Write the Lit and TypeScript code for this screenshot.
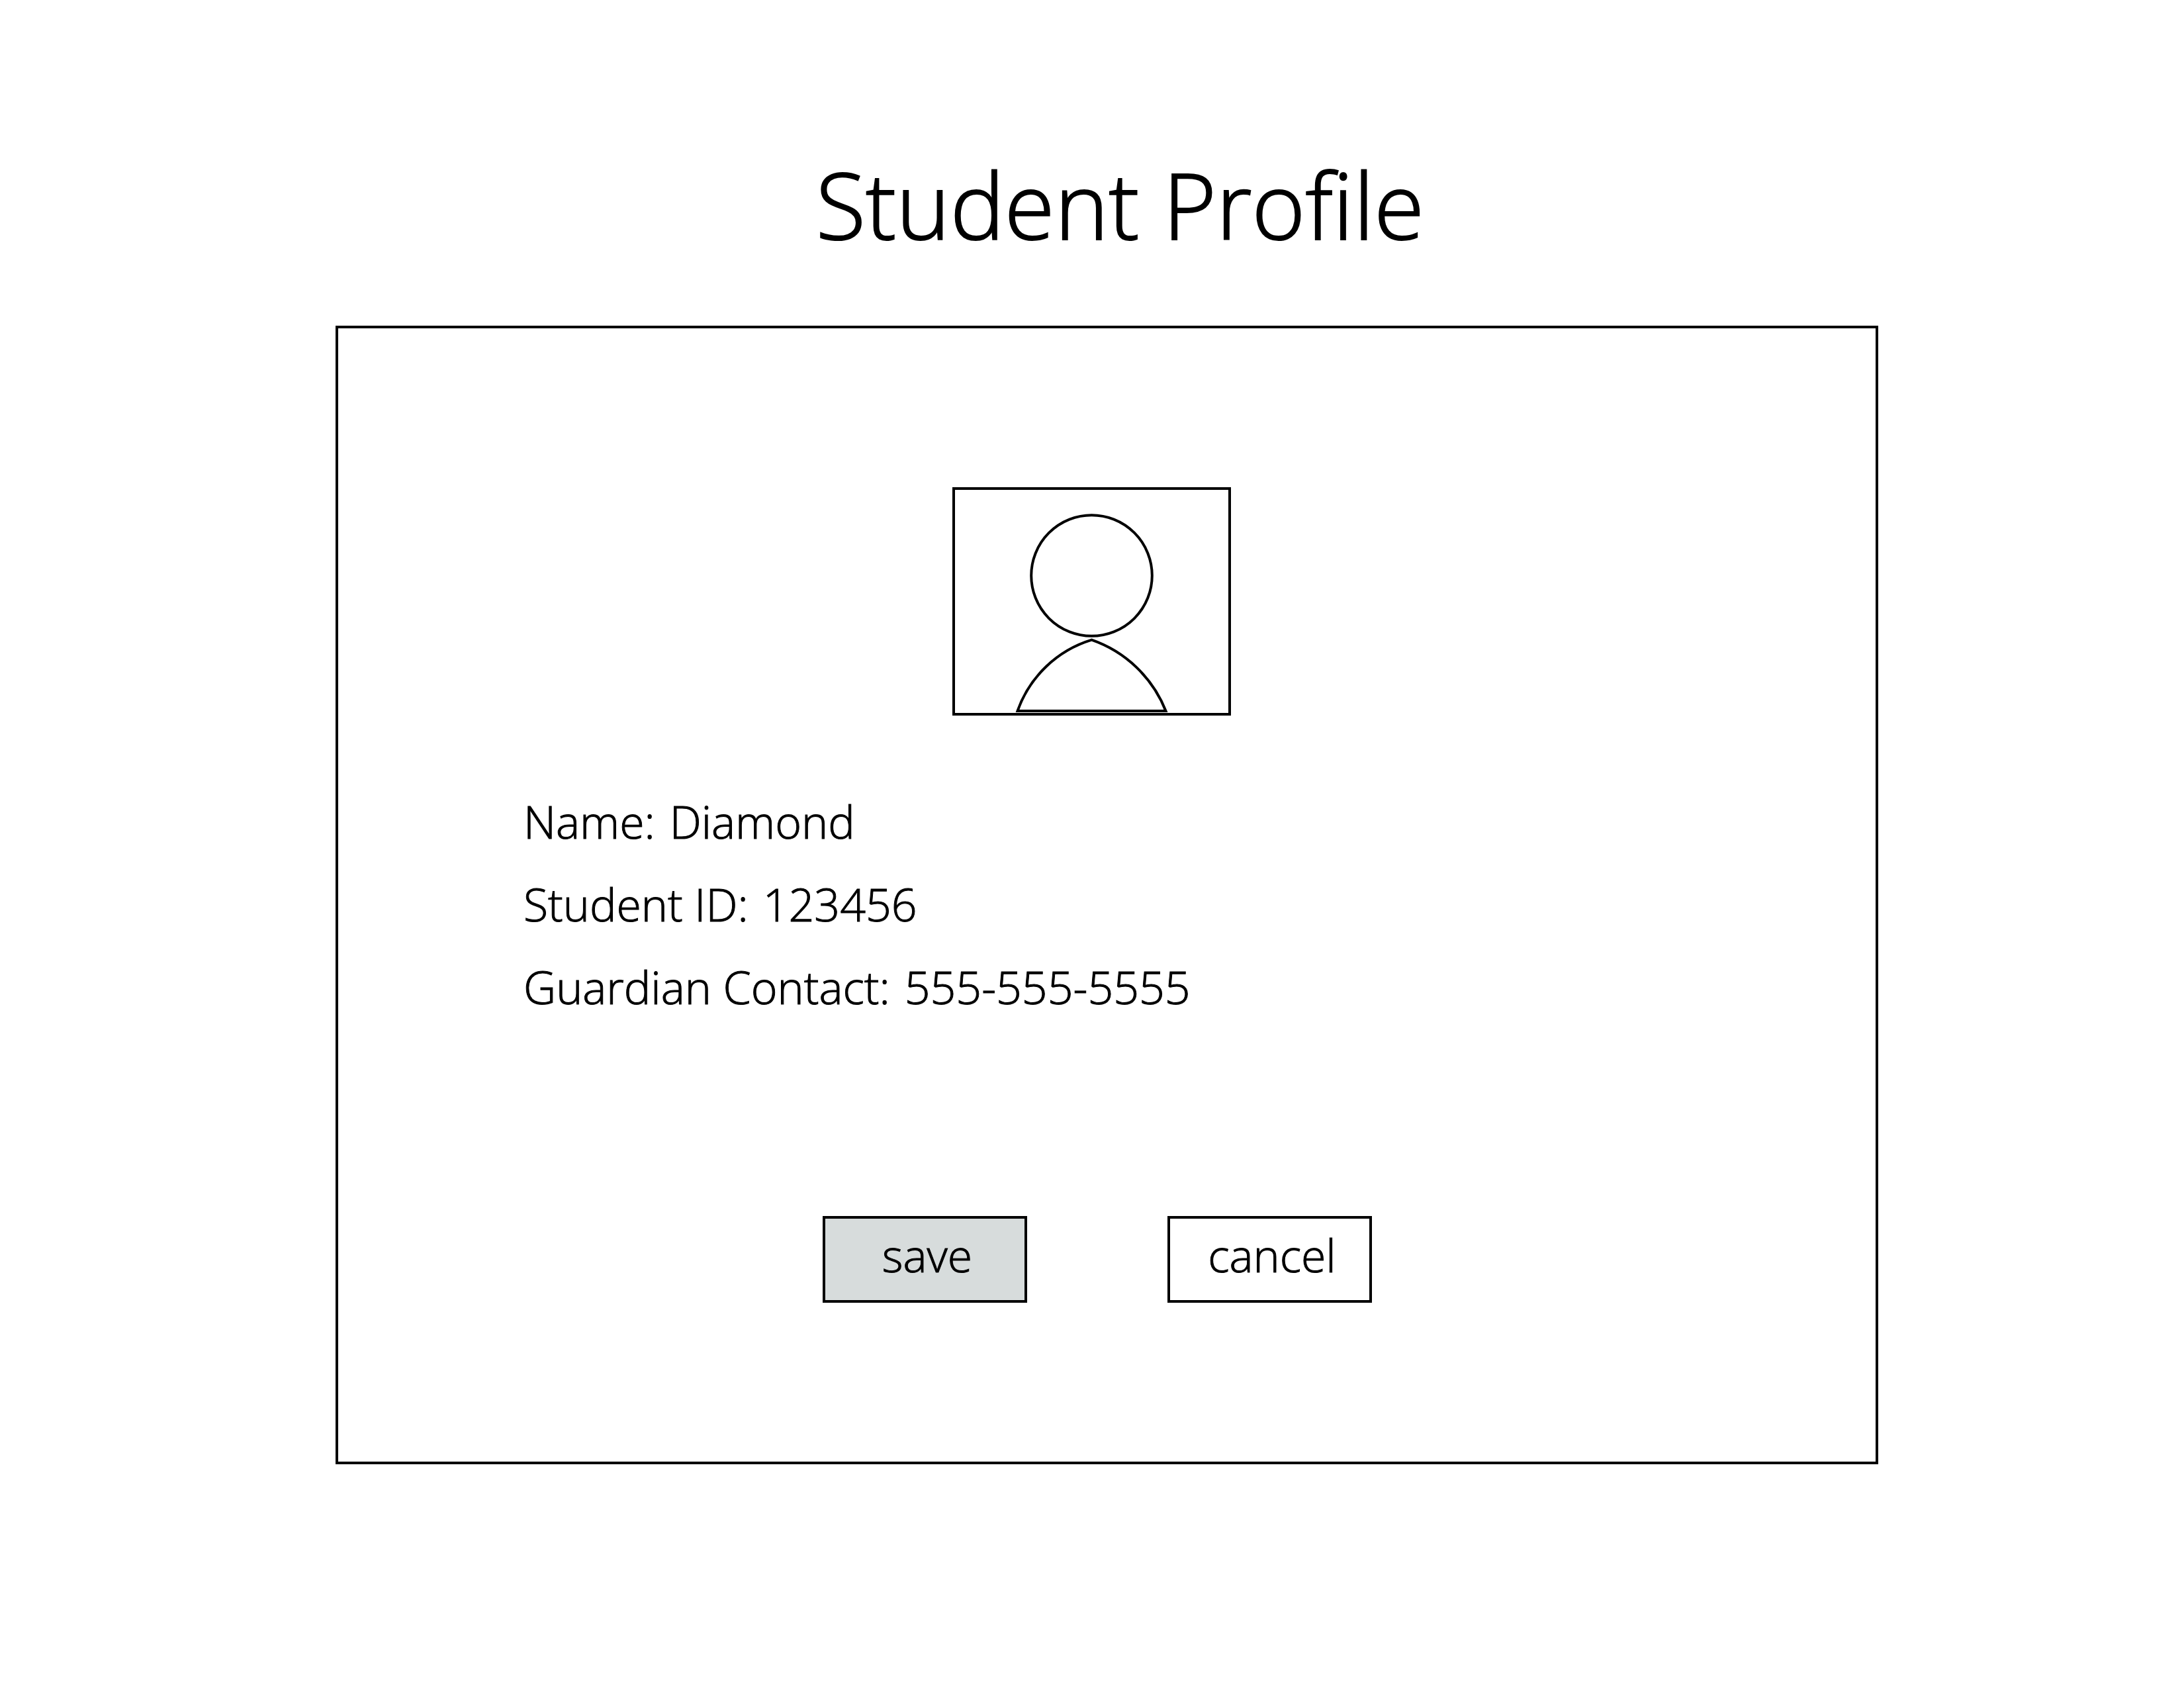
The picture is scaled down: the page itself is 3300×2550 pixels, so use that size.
import { LitElement, html, css } from "lit";
import { customElement, property } from "lit/decorators.js";

interface Field {
  label: string;
  value: string;
}

@customElement("profile-photo")
export class ProfilePhoto extends LitElement {
  static styles = css`
    :host {
      display: block;
    }
    .frame {
      box-sizing: border-box;
      display: block;
      width: 421px;
      border: 4px solid #000;
    }
    .figure {
      display: block;
      width: 100%;
      fill: none;
      stroke: #000;
      stroke-width: 4;
    }
  `;

  render() {
    return html`
      <div class="frame">
        <svg class="figure" viewBox="0 0 413 337" role="img" aria-label="Student photo">
          <circle cx="206.5" cy="129.5" r="91.3" />
          <path d="M206.5 226.7 A172 172 0 0 0 94.5 334 H318.5 A186 186 0 0 0 206.5 226.7 Z" />
        </svg>
      </div>
    `;
  }
}

@customElement("app-root")
export class AppRoot extends LitElement {
  @property({ attribute: false })
  fields: Field[] = [
    { label: "Name", value: "Diamond" },
    { label: "Student ID", value: "123456" },
    { label: "Guardian Contact", value: "555-555-5555" },
  ];

  static styles = css`
    :host {
      display: block;
      background: #fff;
      color: #000;
      font-family: "Open Sans", "Noto Sans", sans-serif;
      font-weight: 300;
      -webkit-text-stroke: 1px #000;
    }
    .page {
      display: grid;
      grid-template-columns: 507fr 2331fr 462fr;
      row-gap: 104px;
      padding: 228px 0;
    }
    .title,
    .card {
      grid-column: 2;
      box-sizing: border-box;
    }
    .title {
      margin: 0;
      padding-left: 40px;
      font-size: 138px;
      font-weight: 300;
      line-height: 160px;
      text-align: center;
      -webkit-text-stroke: 2px #000;
    }
    .card {
      display: flex;
      flex-direction: column;
      padding: 240px 0;
      border: 4px solid #000;
    }
    .photo {
      display: flex;
      justify-content: center;
      padding-right: 46px;
    }
    .fields {
      margin: 97px 0 284px;
      padding: 0 280px;
      font-size: 68px;
      line-height: 125px;
    }
    .field {
      display: flex;
      gap: 22px;
    }
    .label,
    .value {
      margin: 0;
    }
    .actions {
      display: flex;
      justify-content: center;
      gap: 212px;
      padding-right: 30px;
    }
    .button {
      box-sizing: border-box;
      width: 309px;
      height: 131px;
      margin: 0;
      padding: 0 0 14px 8px;
      border: 4px solid #000;
      border-radius: 0;
      background: #fff;
      color: inherit;
      font: inherit;
      font-size: 68px;
      line-height: 92px;
      cursor: pointer;
    }
    .primary {
      background: #d7dcdc;
    }
  `;

  render() {
    return html`
      <main class="page">
        <h1 class="title">Student Profile</h1>
        <section class="card">
          <div class="photo"><profile-photo></profile-photo></div>
          <dl class="fields">
            ${this.fields.map(
              (f) => html`
                <div class="field">
                  <dt class="label">${f.label}:</dt>
                  <dd class="value">${f.value}</dd>
                </div>
              `,
            )}
          </dl>
          <div class="actions">
            <button class="button primary" type="button">save</button>
            <button class="button" type="button">cancel</button>
          </div>
        </section>
      </main>
    `;
  }
}
